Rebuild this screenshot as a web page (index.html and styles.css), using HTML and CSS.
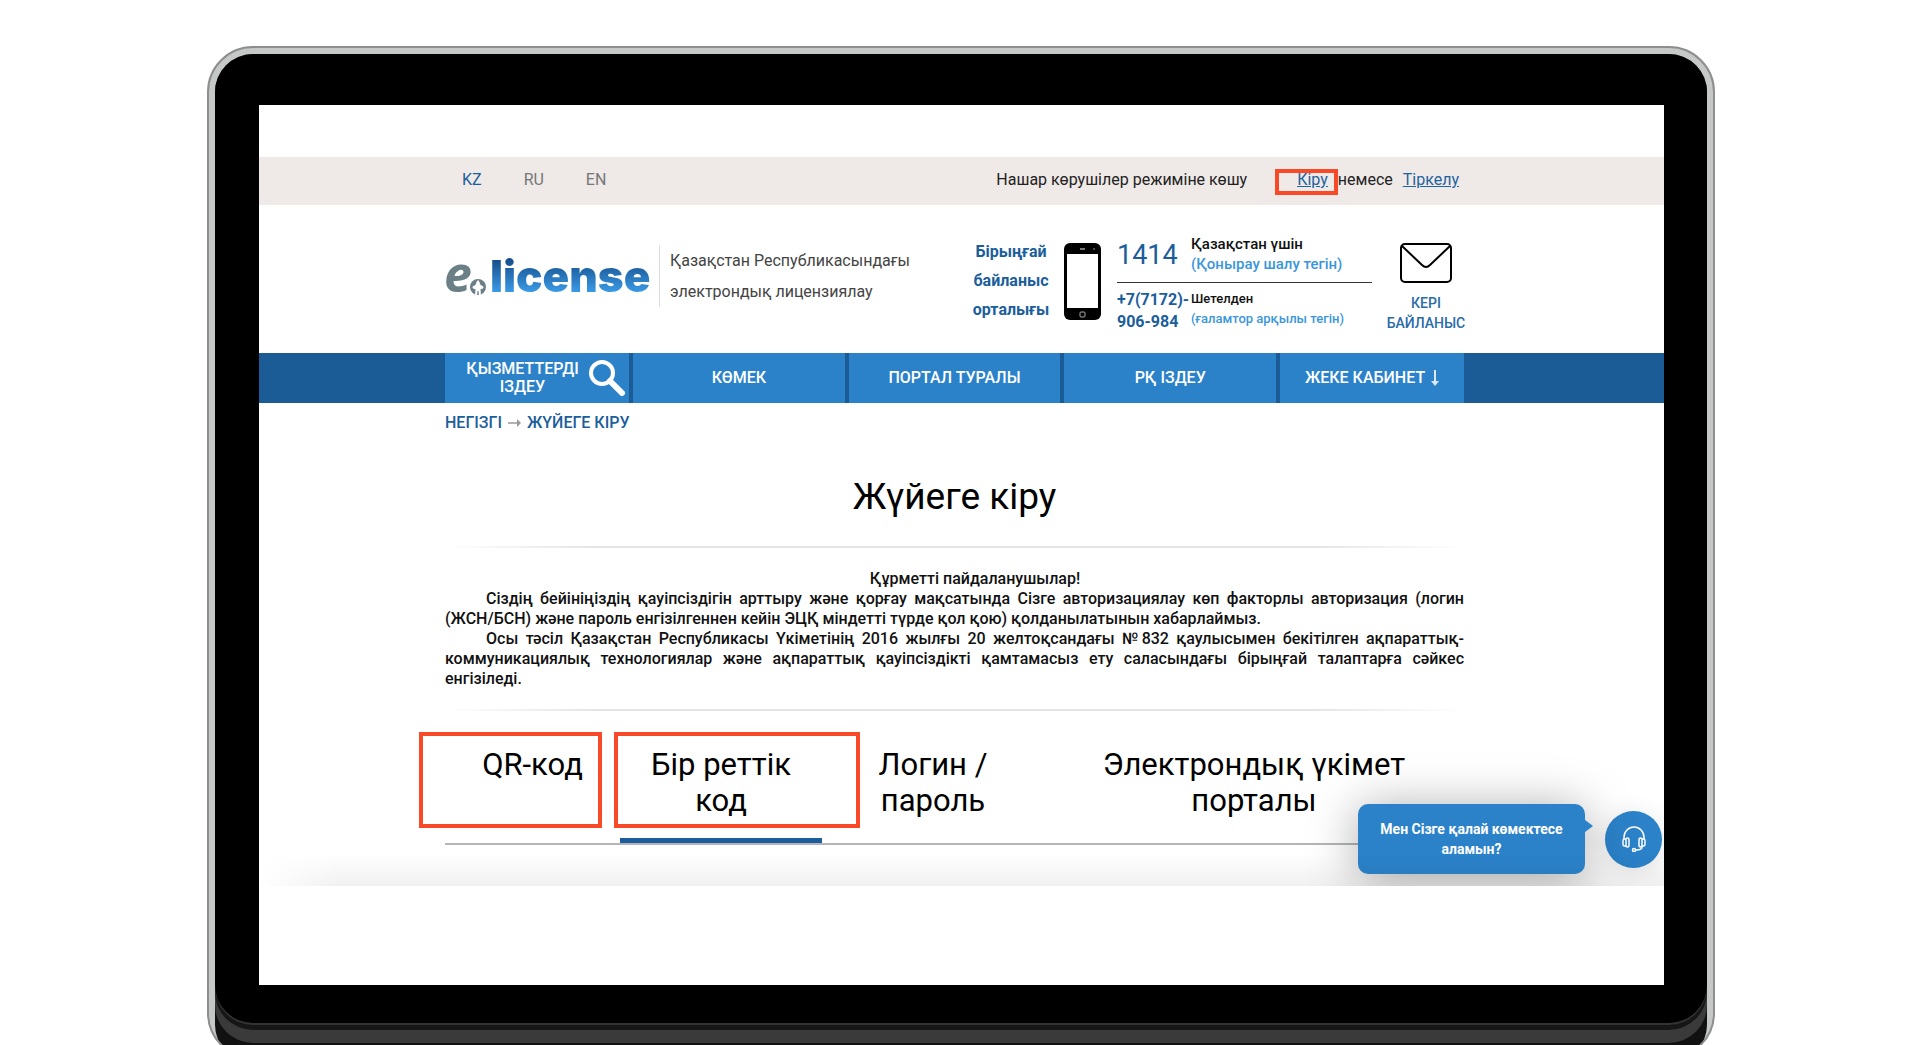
FILE: index.html
```html
<!DOCTYPE html>
<html lang="kk">
<head>
<meta charset="utf-8">
<title>Е-лицензиялау — Жүйеге кіру</title>
<link rel="stylesheet" href="styles.css">
</head>
<body>
<div class="laptop">
<div class="bezel">
<div class="screen">
<div class="page">
  <div class="topbar">
    <nav class="langs">
      <a class="lang lang-active" href="#">KZ</a>
      <a class="lang" href="#">RU</a>
      <a class="lang" href="#">EN</a>
    </nav>
    <div class="account">
      <a class="vision" href="#">Нашар көрушілер режиміне көшу</a>
      <span class="marked"><a class="link" href="#">Кіру</a><span class="mark mark-login"></span></span>
      <span class="or">немесе</span>
      <a class="link" href="#">Тіркелу</a>
    </div>
  </div>

  <header class="header">
    <a class="logo" href="#"><span class="logo-e">e</span><svg class="logo-dot" viewBox="0 0 16 18"><circle cx="8" cy="9" r="8" fill="#6b7f86"/><path d="M8 2C10 4 10 6 10.500 7C12 7.500 13.500 8 13.500 9.500C13.500 11 11 11 10.500 11L11 18H9L8.500 13H7.500L7 18H5L5.500 11C5 11 2.500 11 2.500 9.500C2.500 8 4 7.500 5.500 7C6 6 6 4 8 2Z" fill="#fff"/></svg><span class="logo-text">license</span></a>
    <p class="slogan">Қазақстан Республикасындағы<br>электрондық лицензиялау</p>
    <p class="center-name">Бірыңғай<br>байланыс<br>орталығы</p>
    <svg class="phone" viewBox="0 0 37 77"><rect width="37" height="77" rx="6"/><rect x="3" y="11" width="31" height="54" fill="#fff"/><rect x="16" y="5" width="5" height="2" fill="#777"/><circle cx="30" cy="6" r="1" fill="#666"/><rect x="16" y="69" width="5" height="5" rx="1" fill="none" stroke="#aaa"/></svg>
    <div class="numbers">
      <div class="number-row number-first">
        <span class="short">1414</span>
        <p class="where">Қазақстан үшін<br><span class="free">(Қонырау шалу тегін)</span></p>
      </div>
      <div class="number-row number-second">
        <span class="long">+7(7172)-<br>906-984</span>
        <p class="where where-small">Шетелден<br><span class="free">(ғаламтор арқылы тегін)</span></p>
      </div>
    </div>
    <a class="feedback" href="#">
      <svg class="envelope" viewBox="0 0 52 40"><rect x="1" y="1" width="50" height="38" rx="4" fill="none" stroke="#000" stroke-width="2"/><path d="M2 3L22 22Q26 26 30 22L50 3" fill="none" stroke="#000" stroke-width="2"/></svg>
      КЕРІ<br>БАЙЛАНЫС
    </a>
  </header>

  <nav class="menu">
    <a class="menu-item menu-side menu-search" href="#"><span>ҚЫЗМЕТТЕРДІ<br>ІЗДЕУ</span><svg class="glass" viewBox="0 0 36 36"><circle cx="13" cy="13" r="11" fill="none" stroke="#fff" stroke-width="4"/><path d="M21 21L33 33" stroke="#fff" stroke-width="6" stroke-linecap="round"/></svg></a>
    <a class="menu-item" href="#">КӨМЕК</a>
    <a class="menu-item" href="#">ПОРТАЛ ТУРАЛЫ</a>
    <a class="menu-item" href="#">РҚ ІЗДЕУ</a>
    <a class="menu-item menu-side" href="#">ЖЕКЕ КАБИНЕТ<svg class="down" viewBox="0 0 8 16"><path d="M4 0V13" stroke="#dbe9f6" stroke-width="2"/><path d="M0 11H8L4 16Z" fill="#dbe9f6"/></svg></a>
  </nav>

  <main class="content">
    <nav class="crumbs"><a href="#">НЕГІЗГІ</a><svg class="arrow" viewBox="0 0 13 8"><path d="M0 4H10" stroke="#999" stroke-width="1.500"/><path d="M9 0L13 4L9 8Z" fill="#999"/></svg><a href="#">ЖҮЙЕГЕ КІРУ</a></nav>
    <h1 class="title">Жүйеге кіру</h1>
    <div class="rule"></div>
    <section class="notice">
      <p class="greeting">Құрметті пайдаланушылар!</p>
      <p>Сіздің бейініңіздің қауіпсіздігін арттыру және қорғау мақсатында Сізге авторизациялау көп факторлы авторизация (логин (ЖСН/БСН) және пароль енгізілгеннен кейін ЭЦҚ міндетті түрде қол қою) қолданылатынын хабарлаймыз.</p>
      <p>Осы тәсіл Қазақстан Республикасы Үкіметінің 2016 жылғы 20 желтоқсандағы №832 қаулысымен бекітілген ақпараттық-коммуникациялық технологиялар және ақпараттық қауіпсіздікті қамтамасыз ету саласындағы бірыңғай талаптарға сәйкес енгізіледі.</p>
    </section>
    <div class="rule"></div>
    <div class="tabs">
      <button class="tab tab-qr" type="button">QR-код<span class="mark mark-qr"></span></button>
      <button class="tab tab-code" type="button">Бір реттік<br>код<span class="mark mark-code"></span></button>
      <button class="tab tab-login" type="button">Логин /<br>пароль</button>
      <button class="tab tab-gov" type="button">Электрондық үкімет<br>порталы</button>
    </div>
  </main>

  <div class="chat">
    <div class="bubble">Мен Сізге қалай көмектесе аламын?</div>
    <button class="chat-button" type="button" aria-label="Көмек">
      <svg class="headset" viewBox="0 0 24 26" fill="none" stroke="#fff" stroke-width="1.500"><path d="M2 13V11A10 10 0 0 1 22 11V13"/><rect x="4" y="12" width="3" height="9" rx="1.500"/><rect x="17" y="12" width="3" height="9" rx="1.500"/><path d="M4 13H2Q1 13 1 15V18Q1 20 2 20H4M20 13H22Q23 13 23 15V18Q23 20 22 20H20M20 21Q20 24 14 24"/><circle cx="12" cy="24" r="1.500"/></svg>
    </button>
  </div>
</div>
</div>
</div>
</div>
</body>
</html>
```
FILE: styles.css
```css
* { box-sizing: border-box; }

body {
  margin: 0;
  height: 100vh;
  overflow: hidden;
  background: #fff;
  color: #111;
  font-family: Roboto, "Noto Sans", sans-serif;
  font-size: 16px;
  font-weight: 500;
  line-height: 20px;
}

p, h1 { margin: 0; }
a { color: inherit; text-decoration: none; }
button { border: 0; font: inherit; color: inherit; background: none; cursor: pointer; }

/* Device frame */
.laptop {
  margin: 46px 205px 0 207px;
  padding: 6px 6px 34px;
  border: 2px solid #8e8e8e;
  border-radius: 46px;
  background:
    linear-gradient(#3a3a3a, #3a3a3a) content-box,
    #c6c8c8;
  overflow: hidden;
}

.bezel {
  padding: 51px 43px 38px 44px;
  border-radius: 38px;
  background: #000;
  box-shadow: 0 2px 0 #333, 0 7px 0 #161616, 0 20px 0 #3a3a3a, 0 40px 0 #111;
}

.screen {
  padding: 52px 0 99px;
  background: #fff;
}

.page {
  position: relative;
  overflow: hidden;
}

.page::after {
  content: "";
  position: absolute;
  left: 0;
  right: 0;
  bottom: 0;
  height: 32px;
  background: linear-gradient(rgba(0, 0, 0, 0), rgba(0, 0, 0, 0.06));
  mask-image: linear-gradient(90deg, transparent, #000 80px);
}

/* Top bar */
.topbar {
  display: flex;
  justify-content: space-between;
  align-items: center;
  height: 48px;
  padding: 0 205px 2px 203px;
  background: #efe9e8;
}

.langs { display: flex; gap: 42px; font-weight: 400; }
.lang { color: #777; }
.lang-active { color: #1b5e9b; }
.account { display: flex; gap: 10px; font-weight: 400; color: #222; }
.vision { margin-right: 40px; }
.link { color: #1f639f; text-decoration: underline; }
.marked { position: relative; }

/* Red highlight frames */
.mark {
  position: absolute;
  border: 4px solid #f84a28;
}

.mark-login { inset: -1px -10px -5px -22px; }
.mark-qr { inset: -15px 18px 15px -26px; }
.mark-code { inset: -15px -38px 15px -6px; }

/* Header */
.header {
  display: flex;
  align-items: flex-start;
  height: 148px;
  padding: 38px 196px 0 186px;
}

.logo {
  display: flex;
  align-items: flex-end;
  width: 214px;
  height: 62px;
  padding-bottom: 9px;
}

.logo-e {
  width: 25px;
  margin: 0 1px 3px -1px;
  font: italic 700 50px/40px "Open Sans", sans-serif;
  color: #6b7f86;
}

.logo-dot { width: 16px; height: 18px; }

.logo-text {
  margin-left: 4px;
  font: 900 44px/40px Inter, sans-serif;
  color: transparent;
  background: linear-gradient(#164f8c 10%, #3a9ae6 90%);
  background-clip: text;
}

.slogan {
  height: 62px;
  margin-top: 2px;
  width: 300px;
  padding-left: 10px;
  border-left: 1px solid #ddd;
  line-height: 31px;
  font-weight: 400;
  color: #444;
}

.center-name {
  width: 80px;
  margin-left: 12px;
  line-height: 29px;
  margin-top: -6px;
  font-weight: 700;
  text-align: center;
  color: #1b5e9b;
}

.phone { flex: none; width: 37px; height: 77px; margin-left: 13px; }

.numbers { width: 255px; margin: -9px 0 0 16px; }
.number-row { display: flex; }
.number-first { height: 49px; border-bottom: 1px solid #333; }
.number-second { padding-top: 6px; }
.short, .long { width: 74px; color: #1b5e9b; }
.short { font-size: 27px; font-weight: 400; line-height: 42px; }
.long { font-weight: 700; line-height: 22px; }
.where { white-space: nowrap; font-size: 15px; }
.where-small { font-size: 13px; }
.free { color: #3b96dc; }

.feedback {
  flex: none;
  width: 80px;
  margin-left: 14px;
  font-size: 14px;
  text-align: center;
  color: #2a6ca8;
}

.envelope {
  display: block;
  width: 52px;
  height: 40px;
  margin: 0 auto 10px;
}

/* Main menu */
.menu {
  display: flex;
  gap: 4px;
  height: 50px;
  padding: 0 200px 0 186px;
  background: #1b5c97;
}

.menu-item {
  flex: 1;
  display: flex;
  align-items: center;
  justify-content: center;
  background: #2b82c9;
  color: #fff;
  line-height: 18px;
  text-align: center;
}

.menu-side { flex: 0 0 184px; }
.menu-search { gap: 10px; padding-left: 17px; }
.glass { width: 36px; height: 36px; }
.down { width: 8px; height: 16px; margin-left: 6px; }

/* Content */
.content { padding: 0 200px 41px 186px; }

.crumbs {
  display: flex;
  align-items: center;
  gap: 6px;
  padding-top: 10px;
  color: #1b5e9b;
}

.arrow { width: 13px; height: 8px; }

.title {
  padding: 40px 0 25px;
  font-size: 37px;
  line-height: 48px;
  font-weight: 400;
  text-align: center;
  color: #000;
}

.rule {
  height: 2px;
  background: linear-gradient(90deg, transparent, #e4e4e4 15%, #e4e4e4 85%, transparent);
}

.notice {
  padding: 21px 0 20px;
  text-align: justify;
}

.notice p { text-indent: 41px; }
.notice .greeting { text-align: center; }

.tabs {
  display: flex;
  margin-top: 36px;
  border-bottom: 2px solid #b5b5b5;
  font-size: 31px;
  font-weight: 400;
  line-height: 36px;
  color: #000;
}

.tab {
  position: relative;
  display: block;
  padding: 0 0 24px;
  border-bottom: 0;
  text-align: center;
}

.tab-qr { width: 175px; padding-bottom: 60px; }
.tab-code { width: 202px; box-shadow: inset 0 -5px #1b5e9b; }
.tab-login { width: 222px; }
.tab-gov { flex: 1; }

/* Chat helper */
.chat {
  position: absolute;
  right: 2px;
  bottom: 12px;
  display: flex;
  align-items: center;
  gap: 20px;
}

.bubble {
  position: relative;
  width: 227px;
  padding: 15px 16px;
  border-radius: 10px;
  background: #2b82c9;
  box-shadow: 0 5px 50px rgba(0, 0, 0, 0.35);
  color: #fff;
  font-size: 14px;
  font-weight: 700;
  text-align: center;
}

.bubble::after {
  content: "";
  position: absolute;
  left: 100%;
  top: 16px;
  border-left: 8px solid #2b82c9;
  border-top: 6px solid transparent;
  border-bottom: 6px solid transparent;
}

.chat-button {
  display: flex;
  align-items: center;
  justify-content: center;
  width: 57px;
  height: 57px;
  padding: 0;
  border-radius: 50%;
  background: #2b82c9;
  box-shadow: 0 4px 24px rgba(0, 0, 0, 0.12);
}

.headset { width: 24px; height: 26px; }
```
